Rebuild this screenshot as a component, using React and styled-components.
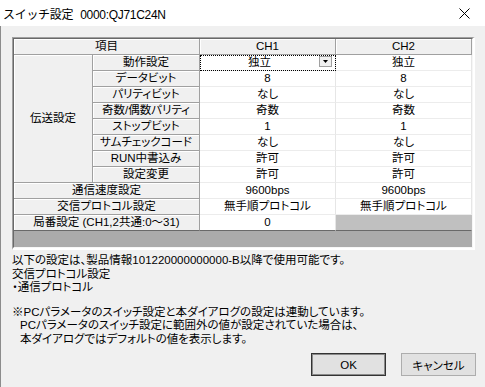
import React from "react";
import styled, { createGlobalStyle } from "styled-components";

const GlobalStyle = createGlobalStyle`
  html, body {
    margin: 0;
    padding: 0;
    background: #f0f0f0;
  }
  body {
    font-family: "Liberation Sans", "Noto Sans CJK JP", sans-serif;
    font-size: 11.5px;
    font-feature-settings: "palt";
    color: #000;
  }
`;

const Window = styled.div`
  width: 485px;
  height: 387px;
  display: flex;
  flex-direction: column;
  background: #f0f0f0;
  overflow: hidden;
`;

const TitleBar = styled.div`
  height: 26px;
  background: #fff;
  display: flex;
  align-items: center;
  padding-left: 3px;
  box-sizing: border-box;
`;

const TitleText = styled.div`
  flex: 1;
  font-size: 12px;
  font-family: "Noto Sans CJK JP", sans-serif;
  font-feature-settings: normal;
  letter-spacing: -0.3px;
  span {
    margin-left: 7px;
    font-family: "Liberation Sans", sans-serif;
  }
`;

const CloseButton = styled.div`
  width: 46px;
  height: 26px;
  display: flex;
  align-items: center;
  justify-content: center;
  margin-right: -2px;
`;

const Body = styled.div`
  flex: 1;
  border-left: 1px solid #8c8c8c;
  padding: 11px 9px 0 11px;
  display: flex;
  flex-direction: column;
`;

const FrameOuter = styled.div`
  width: 463px;
  box-sizing: border-box;
  border-top: 1px solid #a0a0a0;
  border-left: 1px solid #a0a0a0;
  border-right: 2px solid #fff;
  border-bottom: 2px solid #fff;
`;

const FrameInner = styled.div`
  border-top: 1px solid #696969;
  border-left: 1px solid #696969;
  border-right: 1px solid #f6f6f6;
  border-bottom: 1px solid #f6f6f6;
  background: #ababab;
`;

const Grid = styled.div`
  display: grid;
  grid-template-columns: 79px 107px 136px 136px;
  grid-auto-rows: 16px;
`;

const Cell = styled.div`
  box-sizing: border-box;
  display: flex;
  align-items: center;
  justify-content: center;
  white-space: nowrap;
  line-height: 15px;
  grid-column: ${(p) => p.$col || "auto"};
  grid-row: ${(p) => p.$row || "auto"};
`;

const FixedCell = styled(Cell)`
  background: #f0f0f0;
  border-right: 1px solid #a0a0a0;
  border-bottom: 1px solid ${(p) => (p.$last ? "#696969" : "#a0a0a0")};
  box-shadow: inset 1px 1px 0 #fff;
`;

const DataCell = styled(Cell)`
  background: ${(p) => (p.$disabled ? "#c0c0c0" : "#fff")};
  border-right: 1px solid ${(p) => (p.$disabled ? "#c0c0c0" : "#e6e6e6")};
  border-bottom: 1px solid ${(p) => (p.$last ? "#696969" : "#ececec")};
`;

const FocusCell = styled(DataCell)`
  outline: 1px dotted #000;
  outline-offset: -1px;
  justify-content: flex-start;
  padding-right: 3px;
`;

const ComboText = styled.span`
  flex: 1;
  text-align: center;
`;

const DropButton = styled.div`
  width: 13px;
  height: 11px;
  box-sizing: border-box;
  border: 1px solid #a0a0a0;
  background: #f0f0f0;
  display: flex;
  align-items: center;
  justify-content: center;
  margin-top: -2px;
`;

const Filler = styled.div`
  height: 16px;
  background: #ababab;
`;

const Notes = styled.div`
  margin-top: 4px;
  line-height: 13.5px;
`;

const Paragraph = styled.div`
  margin-top: ${(p) => (p.$gap ? "11px" : "0")};
`;

const Line = styled.div`
  padding-left: ${(p) => (p.$indent ? "8px" : "0")};
  white-space: nowrap;
`;

const ButtonRow = styled.div`
  display: flex;
  justify-content: flex-end;
  gap: 15px;
  margin-top: 7px;
`;

const Button = styled.button`
  width: 75px;
  height: 23px;
  box-sizing: border-box;
  background: #e1e1e1;
  font-family: "Liberation Sans", "Noto Sans CJK JP", sans-serif;
  font-size: 11.5px;
  font-feature-settings: "palt";
  color: #000;
  padding: 0;
  border: 1px solid ${(p) => (p.$default ? "#333" : "#adadad")};
  box-shadow: ${(p) => (p.$default ? "inset 0 0 0 1px #8a8a8a" : "none")};
`;

const subRows = [
  ["動作設定", "独立", "独立"],
  ["データビット", "8", "8"],
  ["パリティビット", "なし", "なし"],
  ["奇数/偶数パリティ", "奇数", "奇数"],
  ["ストップビット", "1", "1"],
  ["サムチェックコード", "なし", "なし"],
  ["RUN中書込み", "許可", "許可"],
  ["設定変更", "許可", "許可"],
];

export default function App() {
  return (
    <>
      <GlobalStyle />
      <Window>
        <TitleBar>
          <TitleText>
            スイッチ設定<span>0000:QJ71C24N</span>
          </TitleText>
          <CloseButton>
            <svg width="11" height="11" viewBox="0 0 11 11">
              <path d="M0.5 0.5 L10.5 10.5 M10.5 0.5 L0.5 10.5" stroke="#000" strokeWidth="1" />
            </svg>
          </CloseButton>
        </TitleBar>
        <Body>
          <FrameOuter>
            <FrameInner>
              <Grid>
                <FixedCell $col="1 / 3">項目</FixedCell>
                <FixedCell>CH1</FixedCell>
                <FixedCell>CH2</FixedCell>

                <FixedCell $col="1" $row="2 / span 8">伝送設定</FixedCell>
                {subRows.map(([label, a, b], i) => (
                  <React.Fragment key={label}>
                    <FixedCell $col="2" $row={i + 2}>{label}</FixedCell>
                    {i === 0 ? (
                      <FocusCell $col="3" $row={i + 2}>
                        <ComboText>{a}</ComboText>
                        <DropButton>
                          <svg width="5" height="3" viewBox="0 0 5 3">
                            <path d="M0 0 H5 L2.5 3 Z" fill="#000" />
                          </svg>
                        </DropButton>
                      </FocusCell>
                    ) : (
                      <DataCell $col="3" $row={i + 2}>{a}</DataCell>
                    )}
                    <DataCell $col="4" $row={i + 2}>{b}</DataCell>
                  </React.Fragment>
                ))}

                <FixedCell $col="1 / 3">通信速度設定</FixedCell>
                <DataCell>9600bps</DataCell>
                <DataCell>9600bps</DataCell>

                <FixedCell $col="1 / 3">交信プロトコル設定</FixedCell>
                <DataCell>無手順プロトコル</DataCell>
                <DataCell>無手順プロトコル</DataCell>

                <FixedCell $col="1 / 3" $last>局番設定 (CH1,2共通:0～31)</FixedCell>
                <DataCell $last>0</DataCell>
                <DataCell $last $disabled></DataCell>
              </Grid>
              <Filler />
            </FrameInner>
          </FrameOuter>

          <Notes>
            <Paragraph>
              <Line>以下の設定は、製品情報101220000000000-B以降で使用可能です。</Line>
              <Line>交信プロトコル設定</Line>
              <Line>・通信プロトコル</Line>
            </Paragraph>
            <Paragraph $gap>
              <Line>※PCパラメータのスイッチ設定と本ダイアログの設定は連動しています。</Line>
              <Line $indent>PCパラメータのスイッチ設定に範囲外の値が設定されていた場合は、</Line>
              <Line $indent>本ダイアログではデフォルトの値を表示します。</Line>
            </Paragraph>
          </Notes>

          <ButtonRow>
            <Button $default>OK</Button>
            <Button>キャンセル</Button>
          </ButtonRow>
        </Body>
      </Window>
    </>
  );
}
